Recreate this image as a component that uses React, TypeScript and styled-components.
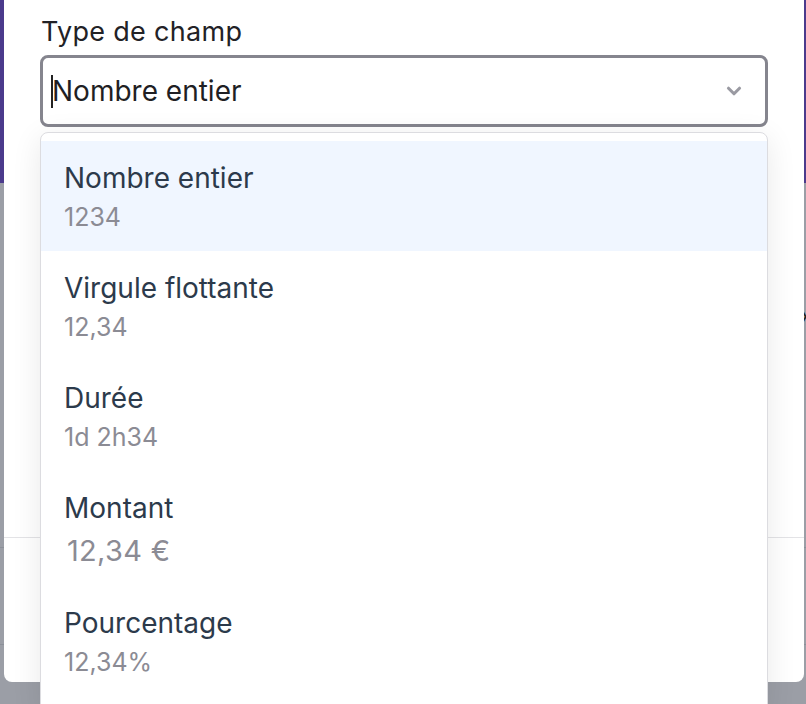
import React from "react";
import styled, { createGlobalStyle } from "styled-components";

const Global = createGlobalStyle`
  html, body { margin: 0; padding: 0; }
  body {
    width: 806px;
    height: 704px;
    overflow: hidden;
    font-family: Inter, "Noto Sans", sans-serif;
    background: #9b9ea6;
  }
`;

const Page = styled.div`
  position: relative;
  width: 806px;
  height: 704px;
  overflow: hidden;
  display: flex;
  flex-direction: column;
`;

const PurpleHeader = styled.div`
  height: 183px;
  background: #4b3a8c;
  flex-shrink: 0;
`;

const BackRows = styled.div`
  flex: 1;
  display: flex;
  flex-direction: column;
  padding-top: 364px;
`;

const BackRow = styled.div`
  height: 96px;
  border-top: 1px solid #8c9099;
`;

const BackGlyph = styled.span`
  position: absolute;
  left: 800px;
  top: 302px;
  font-size: 22px;
  color: #222;
`;

const Modal = styled.div`
  position: absolute;
  left: 4px;
  top: 0;
  width: 800px;
  height: 682px;
  background: #fff;
  border-radius: 0 0 8px 8px;
  display: flex;
  flex-direction: column;
`;

const ModalBody = styled.div`
  position: relative;
  flex: 1;
  padding: 15px 36px 0;
  display: flex;
  flex-direction: column;
`;

const Label = styled.label`
  font-family: Inter, "Liberation Sans", sans-serif;
  font-size: 27px;
  line-height: 34px;
  letter-spacing: 0.3px;
  color: #222226;
  margin-bottom: 6px;
  padding-left: 1px;
`;

const SelectBox = styled.div`
  box-sizing: border-box;
  height: 72px;
  border: 3px solid #85858e;
  border-radius: 8px;
  display: flex;
  align-items: center;
  padding: 0 20px 0 8px;
  background: #fff;
`;

const Caret = styled.span`
  width: 2px;
  height: 33px;
  background: #222;
  margin-right: -1px;
`;

const SelectValue = styled.span`
  flex: 1;
  font-size: 28px;
  line-height: 36px;
  color: #1f1f24;
`;

const ModalFooter = styled.div`
  height: 144px;
  border-top: 1px solid #e3e3e6;
`;

const Menu = styled.ul`
  position: absolute;
  left: 36px;
  top: 132px;
  width: 728px;
  box-sizing: border-box;
  margin: 0;
  padding: 8px 0 16px;
  list-style: none;
  background: #fff;
  border: 1px solid #dcdce0;
  border-radius: 8px;
  box-shadow: 0 6px 30px rgba(0, 0, 0, 0.09);
`;

const Option = styled.li<{ $active?: boolean }>`
  box-sizing: border-box;
  padding: 20px 24px 19px 23px;
  background: ${(p) => (p.$active ? "#f0f6ff" : "transparent")};
  display: flex;
  flex-direction: column;
`;

const OptionTitle = styled.span`
  font-size: 28px;
  line-height: 34px;
  color: #2c3a4b;
`;

const OptionSub = styled.span<{ $large?: boolean }>`
  margin-top: ${(p) => (p.$large ? "9px" : "7px")};
  font-size: ${(p) => (p.$large ? "29px" : "25px")};
  line-height: ${(p) => (p.$large ? "33px" : "30px")};
  color: #8b8b94;
  padding-left: ${(p) => (p.$large ? "3px" : "0")};
  letter-spacing: ${(p) => (p.$large ? "0.3px" : "0")};
`;

const options = [
  { title: "Nombre entier", sub: "1234" },
  { title: "Virgule flottante", sub: "12,34" },
  { title: "Durée", sub: "1d 2h34" },
  { title: "Montant", sub: "12,34 €", large: true },
  { title: "Pourcentage", sub: "12,34%" },
];

const Chevron = () => (
  <svg width="22" height="22" viewBox="0 0 24 24" fill="none" stroke="#9a9aa2" strokeWidth="3.4" strokeLinecap="round" strokeLinejoin="round">
    <path d="M6 9l6 6 6-6" />
  </svg>
);

export default function App() {
  return (
    <>
      <Global />
      <Page>
        <PurpleHeader />
        <BackRows>
          <BackRow />
          <BackRow />
        </BackRows>
        <BackGlyph>x</BackGlyph>
        <Modal>
          <ModalBody>
            <Label>Type de champ</Label>
            <SelectBox>
              <Caret />
              <SelectValue>Nombre entier</SelectValue>
              <Chevron />
            </SelectBox>
            <Menu>
              {options.map((o, i) => (
                <Option key={o.title} $active={i === 0}>
                  <OptionTitle>{o.title}</OptionTitle>
                  <OptionSub $large={o.large}>{o.sub}</OptionSub>
                </Option>
              ))}
            </Menu>
          </ModalBody>
          <ModalFooter />
        </Modal>
      </Page>
    </>
  );
}
